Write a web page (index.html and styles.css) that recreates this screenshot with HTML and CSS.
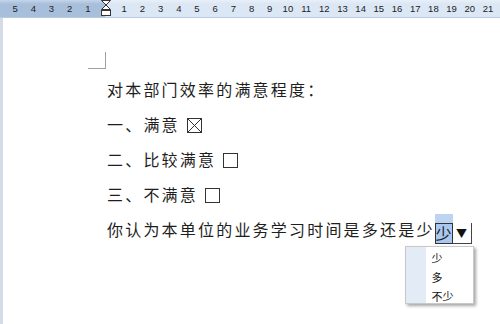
FILE: index.html
```html
<!DOCTYPE html>
<html>
<head>
<meta charset="utf-8">
<link rel="stylesheet" href="styles.css">
</head>
<body>
<div class="ruler">
  <div class="scale">
    <span>5</span><span>4</span><span>3</span><span>2</span><span>1</span><span class="zero"></span>
    <span>1</span><span>2</span><span>3</span><span>4</span><span>5</span><span>6</span><span>7</span>
    <span>8</span><span>9</span><span>10</span><span>11</span><span>12</span><span>13</span><span>14</span>
    <span>15</span><span>16</span><span>17</span><span>18</span><span>19</span><span>20</span><span>21</span>
  </div>
  <svg class="indent" width="12" height="18" viewBox="0 0 12 18">
    <path d="M1.5 0.5 L10.5 0.5 L6 5 Z M6 5 L1.5 9.5 L10.5 9.5 Z" fill="#fff" stroke="#333" stroke-width="1"/>
    <rect x="1.5" y="10.5" width="9" height="5" fill="#fff" stroke="#333" stroke-width="1"/>
  </svg>
</div>
<div class="doc">
  <div class="corner"></div>
  <p class="line">对本部门效率的满意程度：</p>
  <p class="line">一、满意 <span class="cb"><svg width="15" height="15" viewBox="0 0 15 15"><rect x="0.5" y="0.5" width="14" height="14" fill="none" stroke="#333"/><path d="M1 1 L14 14 M14 1 L1 14" stroke="#333" stroke-width="1"/></svg></span></p>
  <p class="line">二、比较满意 <span class="cb"><svg width="15" height="15" viewBox="0 0 15 15"><rect x="0.5" y="0.5" width="14" height="14" fill="none" stroke="#333"/></svg></span></p>
  <p class="line">三、不满意 <span class="cb"><svg width="15" height="15" viewBox="0 0 15 15"><rect x="0.5" y="0.5" width="14" height="14" fill="none" stroke="#333"/></svg></span></p>
  <p class="line">你认为本单位的业务学习时间是多还是少<span class="combo"><span class="sel">少</span><span class="arrow">▼</span>
    <span class="list">
      <span class="item">少</span>
      <span class="item">多</span>
      <span class="item">不少</span>
    </span>
  </span></p>
</div>
</body>
</html>
```
FILE: styles.css
```css
html, body {
  margin: 0;
  padding: 0;
  background: #fff;
}
body {
  width: 500px;
  height: 324px;
  overflow: hidden;
  font-family: "Noto Sans CJK SC", "Noto Sans", sans-serif;
}
.ruler {
  position: relative;
  height: 18px;
  background:
    linear-gradient(to bottom, rgba(255,255,255,0.35) 0, rgba(255,255,255,0) 4px, rgba(255,255,255,0) 17px, #b9c9de 17px),
    linear-gradient(to right, #a8bfdc 0, #a8bfdc 105px, #dce7f5 105px);
}
.scale {
  display: flex;
  padding-left: 6px;
  font-family: "Liberation Sans", Arial, sans-serif;
  font-size: 9.5px;
  color: #222;
  line-height: 18px;
}
.scale span {
  width: 18.2px;
  flex: none;
  text-align: center;
  padding-bottom: 3px;
}
.indent {
  position: absolute;
  left: 100px;
  top: 0;
}
.doc {
  height: 306px;
  border-left: 3px solid #d3dce8;
  box-sizing: border-box;
  padding: 34px 0 0 104px;
}
.corner {
  width: 17px;
  height: 16px;
  margin-left: -19px;
  border-right: 1px solid #a0a0a0;
  border-bottom: 1px solid #a0a0a0;
}
.line {
  margin: 0;
  font-size: 16px;
  letter-spacing: 2.2px;
  line-height: 35px;
  height: 35px;
  color: #1e1e1e;
  white-space: nowrap;
}
.line:first-of-type {
  margin-top: 3px;
}
.cb {
  display: inline-block;
  vertical-align: -2px;
  margin-left: 1px;
  line-height: 0;
}
.combo {
  position: relative;
  display: inline-flex;
  vertical-align: -4px;
  letter-spacing: 0;
}
.sel {
  position: relative;
  width: 16px;
  height: 19px;
  border: 1px solid #333;
  background: #a9c7ef;
  line-height: 19px;
  font-size: 16px;
  text-align: center;
}
.sel::before {
  content: "";
  position: absolute;
  left: -1px;
  right: -1px;
  top: -10px;
  height: 9px;
  background: #bcd3f2;
}
.arrow {
  width: 18px;
  height: 20px;
  border-right: 1px solid #444;
  border-bottom: 1px solid #444;
  background: #fff;
  font-size: 11px;
  line-height: 20px;
  text-align: center;
  color: #111;
}
.list {
  position: absolute;
  left: -30px;
  top: 23px;
  width: 69px;
  height: 58px;
  border: 1px solid #c8c8c8;
  background: linear-gradient(to right, #e3ebf6 0, #e3ebf6 20px, #fff 20px);
  box-shadow: 2px 2px 3px rgba(0,0,0,0.35);
  display: flex;
  flex-direction: column;
  padding: 2px 0 0 26px;
  box-sizing: border-box;
}
.item {
  font-size: 11px;
  line-height: 19px;
  height: 19px;
  color: #111;
}
```
